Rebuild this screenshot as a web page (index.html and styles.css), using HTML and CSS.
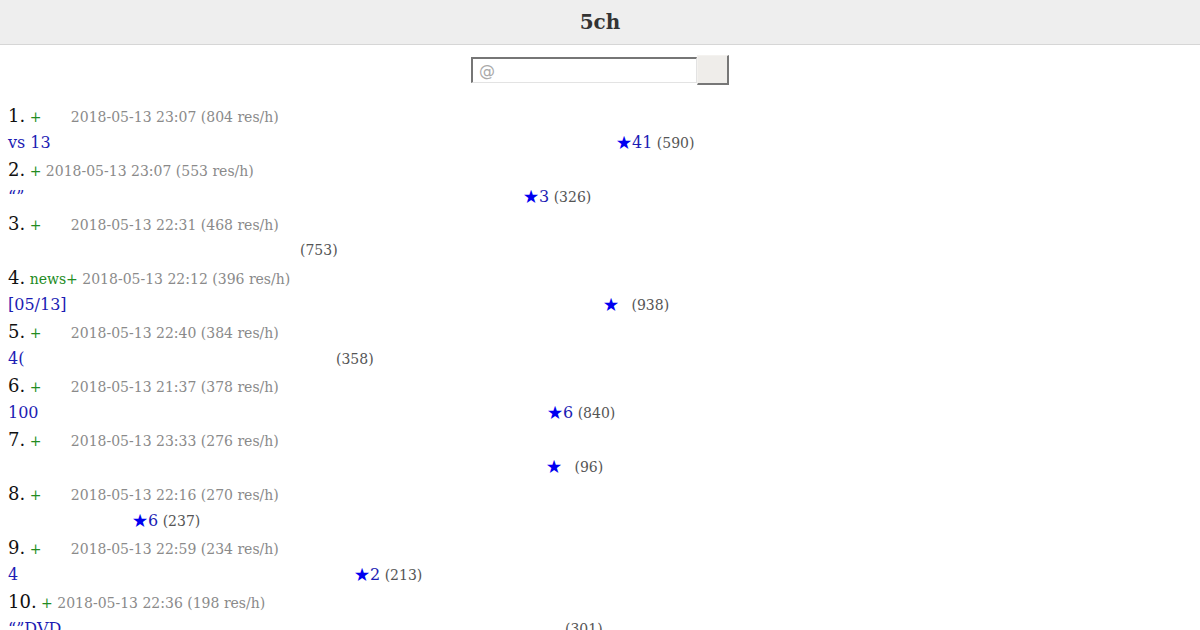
FILE: index.html
```html
<!DOCTYPE html>
<html lang="ja">
<head>
<meta charset="utf-8">
<title>5ch</title>
<link rel="stylesheet" href="styles.css">
</head>
<body>
<header class="topbar"><h1 class="logo">5ch</h1></header>
<form class="search">
  <input class="search-input" type="text" placeholder="@">
  <button class="search-btn" type="button"></button>
</form>
<ol class="threads">
  <li class="thread">
    <div class="meta-line"><span class="num">1.</span> <a class="board">+</a><span class="gap"></span> <span class="date">2018-05-13 23:07 (804 res/h)</span></div>
    <div class="title-line"><a class="title" style="width:608px">vs 13</a><span class="star"><span class="star-icon">★</span>41</span> <span class="count">(590)</span></div>
  </li>
  <li class="thread">
    <div class="meta-line"><span class="num">2.</span> <a class="board">+</a> <span class="date">2018-05-13 23:07 (553 res/h)</span></div>
    <div class="title-line"><a class="title" style="width:515px">“”</a><span class="star"><span class="star-icon">★</span>3</span> <span class="count">(326)</span></div>
  </li>
  <li class="thread">
    <div class="meta-line"><span class="num">3.</span> <a class="board">+</a><span class="gap"></span> <span class="date">2018-05-13 22:31 (468 res/h)</span></div>
    <div class="title-line"><a class="title" style="width:292px"></a><span class="count">(753)</span></div>
  </li>
  <li class="thread">
    <div class="meta-line"><span class="num">4.</span> <a class="board">news+</a> <span class="date">2018-05-13 22:12 (396 res/h)</span></div>
    <div class="title-line"><a class="title" style="width:595px">[05/13]</a><span class="star star-blank"><span class="star-icon">★</span></span> <span class="count">(938)</span></div>
  </li>
  <li class="thread">
    <div class="meta-line"><span class="num">5.</span> <a class="board">+</a><span class="gap"></span> <span class="date">2018-05-13 22:40 (384 res/h)</span></div>
    <div class="title-line"><a class="title" style="width:328px">4(</a><span class="count">(358)</span></div>
  </li>
  <li class="thread">
    <div class="meta-line"><span class="num">6.</span> <a class="board">+</a><span class="gap"></span> <span class="date">2018-05-13 21:37 (378 res/h)</span></div>
    <div class="title-line"><a class="title" style="width:539px">100</a><span class="star"><span class="star-icon">★</span>6</span> <span class="count">(840)</span></div>
  </li>
  <li class="thread">
    <div class="meta-line"><span class="num">7.</span> <a class="board">+</a><span class="gap"></span> <span class="date">2018-05-13 23:33 (276 res/h)</span></div>
    <div class="title-line"><a class="title" style="width:538px"></a><span class="star star-blank"><span class="star-icon">★</span></span> <span class="count">(96)</span></div>
  </li>
  <li class="thread">
    <div class="meta-line"><span class="num">8.</span> <a class="board">+</a><span class="gap"></span> <span class="date">2018-05-13 22:16 (270 res/h)</span></div>
    <div class="title-line"><a class="title" style="width:124px"></a><span class="star"><span class="star-icon">★</span>6</span> <span class="count">(237)</span></div>
  </li>
  <li class="thread">
    <div class="meta-line"><span class="num">9.</span> <a class="board">+</a><span class="gap"></span> <span class="date">2018-05-13 22:59 (234 res/h)</span></div>
    <div class="title-line"><a class="title" style="width:346px">4</a><span class="star"><span class="star-icon">★</span>2</span> <span class="count">(213)</span></div>
  </li>
  <li class="thread">
    <div class="meta-line"><span class="num">10.</span> <a class="board">+</a> <span class="date">2018-05-13 22:36 (198 res/h)</span></div>
    <div class="title-line"><a class="title" style="width:557px">“”DVD</a><span class="count">(301)</span></div>
  </li>
</ol>
</body>
</html>
```

FILE: styles.css
```css
html, body {
  margin: 0;
  padding: 0;
  background: #fff;
  font-family: "DejaVu Serif", serif;
}

.topbar {
  height: 44px;
  background: #eeeeee;
  border-bottom: 1px solid #d6d6d6;
  display: flex;
  align-items: center;
  justify-content: center;
}

.logo {
  margin: 0;
  font-size: 20px;
  font-weight: bold;
  color: #333;
}

.search {
  display: flex;
  justify-content: center;
  align-items: center;
  margin: 10px 0 0;
  height: 30px;
}

.search-input {
  box-sizing: border-box;
  width: 226px;
  height: 26px;
  margin: 0;
  padding: 0 6px;
  border-style: solid;
  border-width: 2px 1px 1px 2px;
  border-color: #767676 #e3e3e3 #e3e3e3 #767676;
  background: #fff;
  font-family: "DejaVu Sans", sans-serif;
  font-size: 16px;
  outline: none;
}

.search-input::placeholder {
  color: #a9a9a9;
}

.search-btn {
  box-sizing: border-box;
  width: 32px;
  height: 30px;
  margin: 0;
  padding: 0;
  background: #efedea;
  border-style: solid;
  border-width: 1px 2px 2px 1px;
  border-color: #f4f2ef #777 #777 #f4f2ef;
}

.threads {
  list-style: none;
  margin: 0;
  padding: 17px 0 0 8px;
}

.thread {
  font-size: 14px;
}

.meta-line,
.title-line {
  height: 27px;
  line-height: 27px;
  white-space: nowrap;
}

.num {
  font-size: 18px;
  color: #111;
}

.board {
  color: #228b22;
  font-size: 14px;
}

.gap {
  display: inline-block;
  width: 25px;
}

.date {
  color: #8a8a8a;
  font-size: 14px;
}

.title {
  display: inline-block;
  color: #1c1cb4;
  font-size: 16px;
}

.star {
  color: #1c1cb4;
  font-size: 16px;
}

.star-icon {
  color: #0000f0;
}

.star-blank {
  margin-right: 8px;
}

.count {
  color: #555;
  font-size: 14px;
}
```
